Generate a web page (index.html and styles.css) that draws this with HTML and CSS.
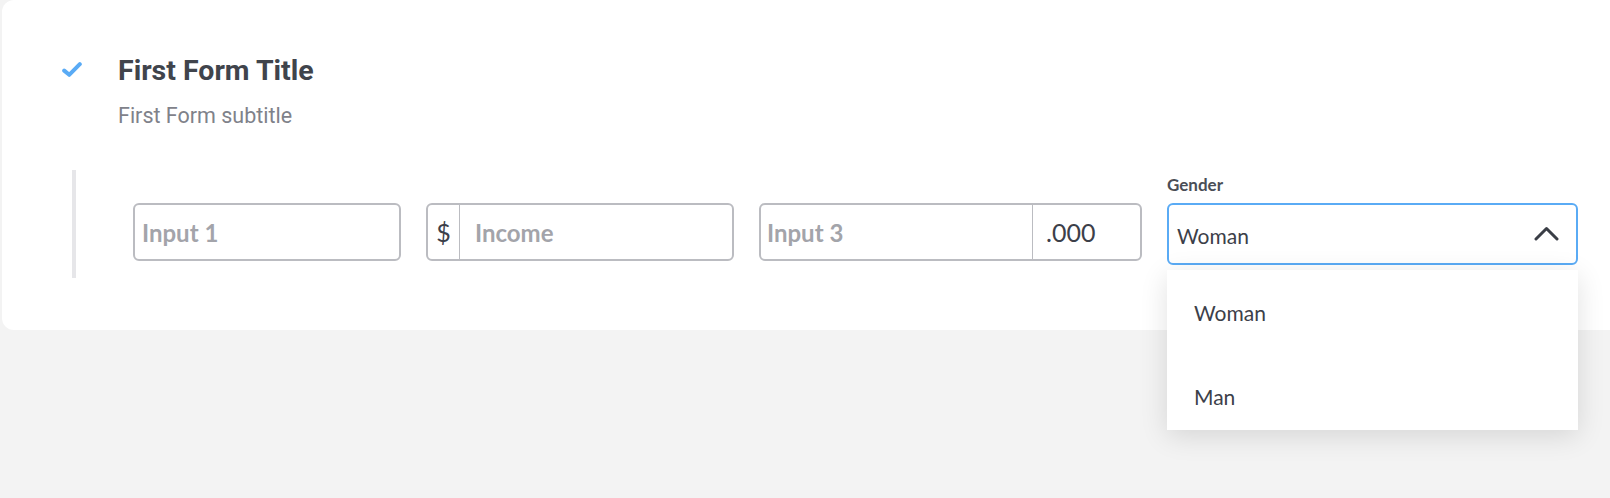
FILE: index.html
```html
<!DOCTYPE html>
<html lang="en">
<head>
<meta charset="utf-8">
<title>First Form</title>
<link rel="stylesheet" href="styles.css">
</head>
<body>
<div class="card">
  <div class="header">
    <svg class="check" viewBox="0 0 20 15" width="20" height="15" aria-hidden="true">
      <polyline points="2.2,8.6 7.2,12.8 17.8,2.2" fill="none" stroke="#5aabf5" stroke-width="4" stroke-linecap="round" stroke-linejoin="round"/>
    </svg>
    <div class="titles">
      <h1 class="title">First Form Title</h1>
      <p class="subtitle">First Form subtitle</p>
    </div>
  </div>
  <div class="fields">
    <div class="field f1">
      <div class="label"></div>
      <div class="control"><span class="text placeholder">Input 1</span></div>
    </div>
    <div class="field f2">
      <div class="label"></div>
      <div class="control">
        <span class="prefix">$</span>
        <span class="text placeholder after-prefix">Income</span>
      </div>
    </div>
    <div class="field f3">
      <div class="label"></div>
      <div class="control">
        <span class="text placeholder grow">Input 3</span>
        <span class="suffix">.000</span>
      </div>
    </div>
    <div class="field f4">
      <div class="label">Gender</div>
      <div class="select">
        <span class="value">Woman</span>
        <svg class="chevron" viewBox="0 0 25 15" width="25" height="15" aria-hidden="true">
          <polyline points="2,13 12.5,2.5 23,13" fill="none" stroke="#3a3e46" stroke-width="3" stroke-linecap="round" stroke-linejoin="round"/>
        </svg>
        <ul class="menu">
          <li class="option">Woman</li>
          <li class="option">Man</li>
        </ul>
      </div>
    </div>
  </div>
</div>
</body>
</html>
```
FILE: styles.css
```css
html {
  background: #f3f3f3;
}

body {
  margin: 0;
  padding: 0;
  min-height: 498px;
  background: #f3f3f3;
}

.card {
  margin-left: 2px;
  background: #ffffff;
  border-radius: 12px 0 0 12px;
  padding: 55px 0 52px 60px;
  box-sizing: border-box;
  height: 330px;
}

.header {
  display: flex;
  align-items: flex-start;
}

.check {
  display: block;
  flex: none;
  margin-top: 7px;
  margin-right: 36px;
}

.title {
  margin: 0;
  font-family: Roboto, "Liberation Sans", sans-serif;
  font-weight: 700;
  font-size: 28.5px;
  line-height: 32px;
  color: #40444c;
}

.subtitle {
  margin: 17px 0 0 0;
  font-family: Roboto, "Liberation Sans", sans-serif;
  font-weight: 400;
  font-size: 21.5px;
  line-height: 24px;
  color: #7f828a;
}

.fields {
  margin: 42px 0 0 10px;
  border-left: 4px solid #e6e6e9;
  padding: 5px 0 13px 57px;
  display: grid;
  grid-template-columns: 268px 308px 383px 411px;
  column-gap: 25px;
  align-items: start;
  font-family: Lato, "Liberation Sans", sans-serif;
}

.label {
  height: 20px;
  line-height: 20px;
  margin-bottom: 8px;
  font-size: 17px;
  font-weight: 700;
  color: #4a4e56;
}

.control {
  height: 58px;
  box-sizing: border-box;
  border: 2px solid #bbbcc1;
  border-radius: 6px;
  display: flex;
  align-items: stretch;
  background: #fff;
}

.text {
  display: flex;
  align-items: center;
  padding-left: 7px;
  font-size: 24px;
}

.placeholder {
  color: #a3a4aa;
  font-weight: 700;
}

.grow {
  flex: 1;
  padding-left: 6px;
}

.prefix {
  width: 31px;
  flex: none;
  display: flex;
  align-items: center;
  justify-content: center;
  border-right: 1.5px solid #bbbcc1;
  font-size: 25px;
  color: #3c4049;
}

.after-prefix {
  padding-left: 15px;
}

.suffix {
  width: 108px;
  flex: none;
  display: flex;
  align-items: center;
  box-sizing: border-box;
  padding-left: 13px;
  border-left: 1.5px solid #bbbcc1;
  font-size: 25px;
  color: #3c4049;
}

.select {
  position: relative;
  height: 62px;
  box-sizing: border-box;
  border: 2px solid #5aabf5;
  border-radius: 6px;
  display: flex;
  align-items: center;
  justify-content: space-between;
  padding: 2px 17px 0 8px;
}

.value {
  font-size: 21px;
  color: #3c4049;
}

.chevron {
  display: block;
  margin-top: -4px;
}

.menu {
  position: absolute;
  top: calc(100% + 7px);
  left: -2px;
  right: -2px;
  height: 160px;
  margin: 0;
  padding: 0;
  list-style: none;
  background: #ffffff;
  overflow: hidden;
  box-shadow: 0 6px 26px rgba(0, 0, 0, 0.12);
  z-index: 2;
}

.option {
  height: 84px;
  display: flex;
  align-items: center;
  padding-left: 27px;
  font-size: 21px;
  color: #3c4049;
}
```
